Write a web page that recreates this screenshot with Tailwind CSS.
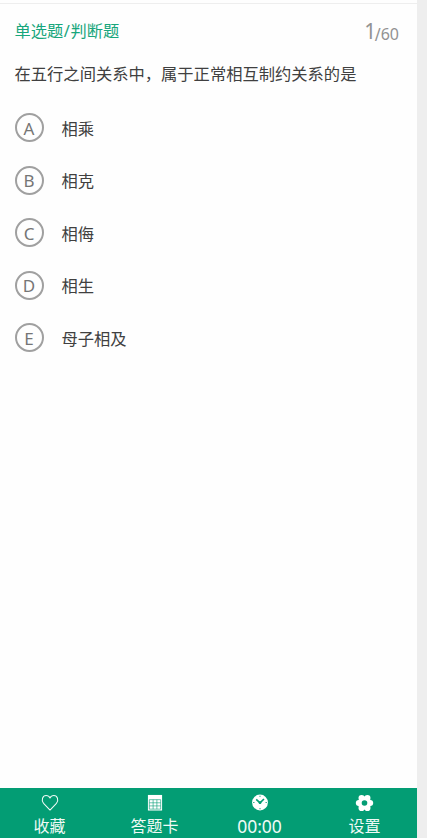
<!DOCTYPE html>
<html lang="zh-CN">
<head>
  <meta charset="UTF-8" />
  <title>单选题/判断题</title>
  <meta name="viewport" content="width=device-width, initial-scale=1.0" />
  <script src="https://cdn.jsdelivr.net/npm/@tailwindcss/browser@4"></script>
</head>
<body class="bg-[#eeeeee] font-['Noto_Sans','Noto_Sans_CJK_SC',sans-serif] text-[16.3px] text-[#404040]">

  <div class="flex h-[838px] w-[417px] flex-col bg-[#fefefe]">
    <div class="h-1 shrink-0 border-b border-[#eeeeee]"></div>

    <main class="flex-1 pl-[14.5px] pr-[18px]">
      <div class="flex h-[54px] items-center justify-between leading-6 text-[#18a67c]">
        <h1>单选题<span class="mx-[0.5px]">/</span>判断题</h1>
        <p class="flex pt-[2px] text-[16px] text-[#929292]"><span class="text-[21px]">1</span><span class="-ml-[1.5px] pt-[3px]"><span class="inline-block scale-y-115">/</span>60</span></p>
      </div>

      <p class="h-[55px] whitespace-nowrap pt-1 leading-6">在五行之间关系中，属于正常相互制约关系的是</p>

      <ul class="flex flex-col gap-[23.6px]">
        <li class="flex h-[29px] items-center gap-[18px]">
          <span class="flex size-[29px] items-center justify-center rounded-full border-2 border-[#a0a0a0] pt-px text-[17px] leading-none text-[#757575]">A</span>
          <span class="pt-0.5 leading-6">相乘</span>
        </li>
        <li class="flex h-[29px] items-center gap-[18px]">
          <span class="flex size-[29px] items-center justify-center rounded-full border-2 border-[#a0a0a0] pt-px text-[17px] leading-none text-[#757575]">B</span>
          <span class="pt-0.5 leading-6">相克</span>
        </li>
        <li class="flex h-[29px] items-center gap-[18px]">
          <span class="flex size-[29px] items-center justify-center rounded-full border-2 border-[#a0a0a0] pt-px text-[17px] leading-none text-[#757575]">C</span>
          <span class="pt-0.5 leading-6">相侮</span>
        </li>
        <li class="flex h-[29px] items-center gap-[18px]">
          <span class="flex size-[29px] items-center justify-center rounded-full border-2 border-[#a0a0a0] pt-px text-[17px] leading-none text-[#757575]">D</span>
          <span class="pt-0.5 leading-6">相生</span>
        </li>
        <li class="flex h-[29px] items-center gap-[18px]">
          <span class="flex size-[29px] items-center justify-center rounded-full border-2 border-[#a0a0a0] pt-px text-[17px] leading-none text-[#757575]">E</span>
          <span class="pt-0.5 leading-6">母子相及</span>
        </li>
      </ul>
    </main>

    <!-- Bottom toolbar -->
    <nav class="flex h-[50px] shrink-0 justify-between bg-[#039d74] pl-[14.5px] pr-[17.5px] text-[16px] leading-6 text-[#f0faf6]">
      <div class="flex w-[70px] flex-col items-center gap-[3px] pt-1.5">
        <svg class="size-[18px]" viewBox="0 0 18 18" fill="none" stroke="currentColor" stroke-width="1.1">
          <path d="M9 17 2.200 9.900C-.6 6.500 1.100 1.600 4.900 1.600 6.800 1.600 8.300 2.700 9 4.300 9.700 2.700 11.200 1.600 13.100 1.600c3.800 0 5.500 4.900 2.700 8.300Z" stroke-linejoin="round" />
        </svg>
        <span>收藏</span>
      </div>
      <div class="flex w-[70px] flex-col items-center gap-[3px] pt-1.5">
        <svg class="size-[18px]" viewBox="0 0 18 18">
          <path d="M1.500 1h15v16.500h-15Z" fill="white" />
          <path d="M3 6h12v10H3ZM7 6v10M11 6v10M3 9.300h12M3 12.600h12" fill="none" stroke="#039d74" stroke-opacity=".8" stroke-width=".8" />
        </svg>
        <span>答题卡</span>
      </div>
      <div class="flex w-[70px] flex-col items-center gap-[3px] pt-1.5">
        <svg class="size-[18px]" viewBox="0 0 18 18">
          <circle cx="9" cy="9" r="8.400" fill="white" />
          <path d="M5 5.700 9 9.300 13.200 5.300" fill="none" stroke="#039d74" stroke-width="1.700" />
          <circle cx="9" cy="9.200" r="1.500" fill="#039d74" />
          <path d="M9 1.800v1.300M9 14.900v1.300M1.800 9h1.300M14.900 9h1.300" stroke="#039d74" stroke-width="1" />
        </svg>
        <span class="text-[17.5px]">00:00</span>
      </div>
      <div class="flex w-[70px] flex-col items-center gap-[3px] pt-1.5">
        <svg class="-mb-px size-[19px]" viewBox="0 0 18 18">
          <g fill="white">
            <circle cx="3.300" cy="9" r="3" />
            <circle cx="14.700" cy="9" r="3" />
            <circle cx="6.100" cy="4.100" r="3.100" />
            <circle cx="11.900" cy="4.100" r="3.100" />
            <circle cx="6.100" cy="13.900" r="3.100" />
            <circle cx="11.900" cy="13.900" r="3.100" />
            <circle cx="9" cy="9" r="6.600" />
          </g>
          <circle cx="9" cy="9" r="2.800" fill="#039d74" />
        </svg>
        <span>设置</span>
      </div>
    </nav>
  </div>

</body>
</html>
